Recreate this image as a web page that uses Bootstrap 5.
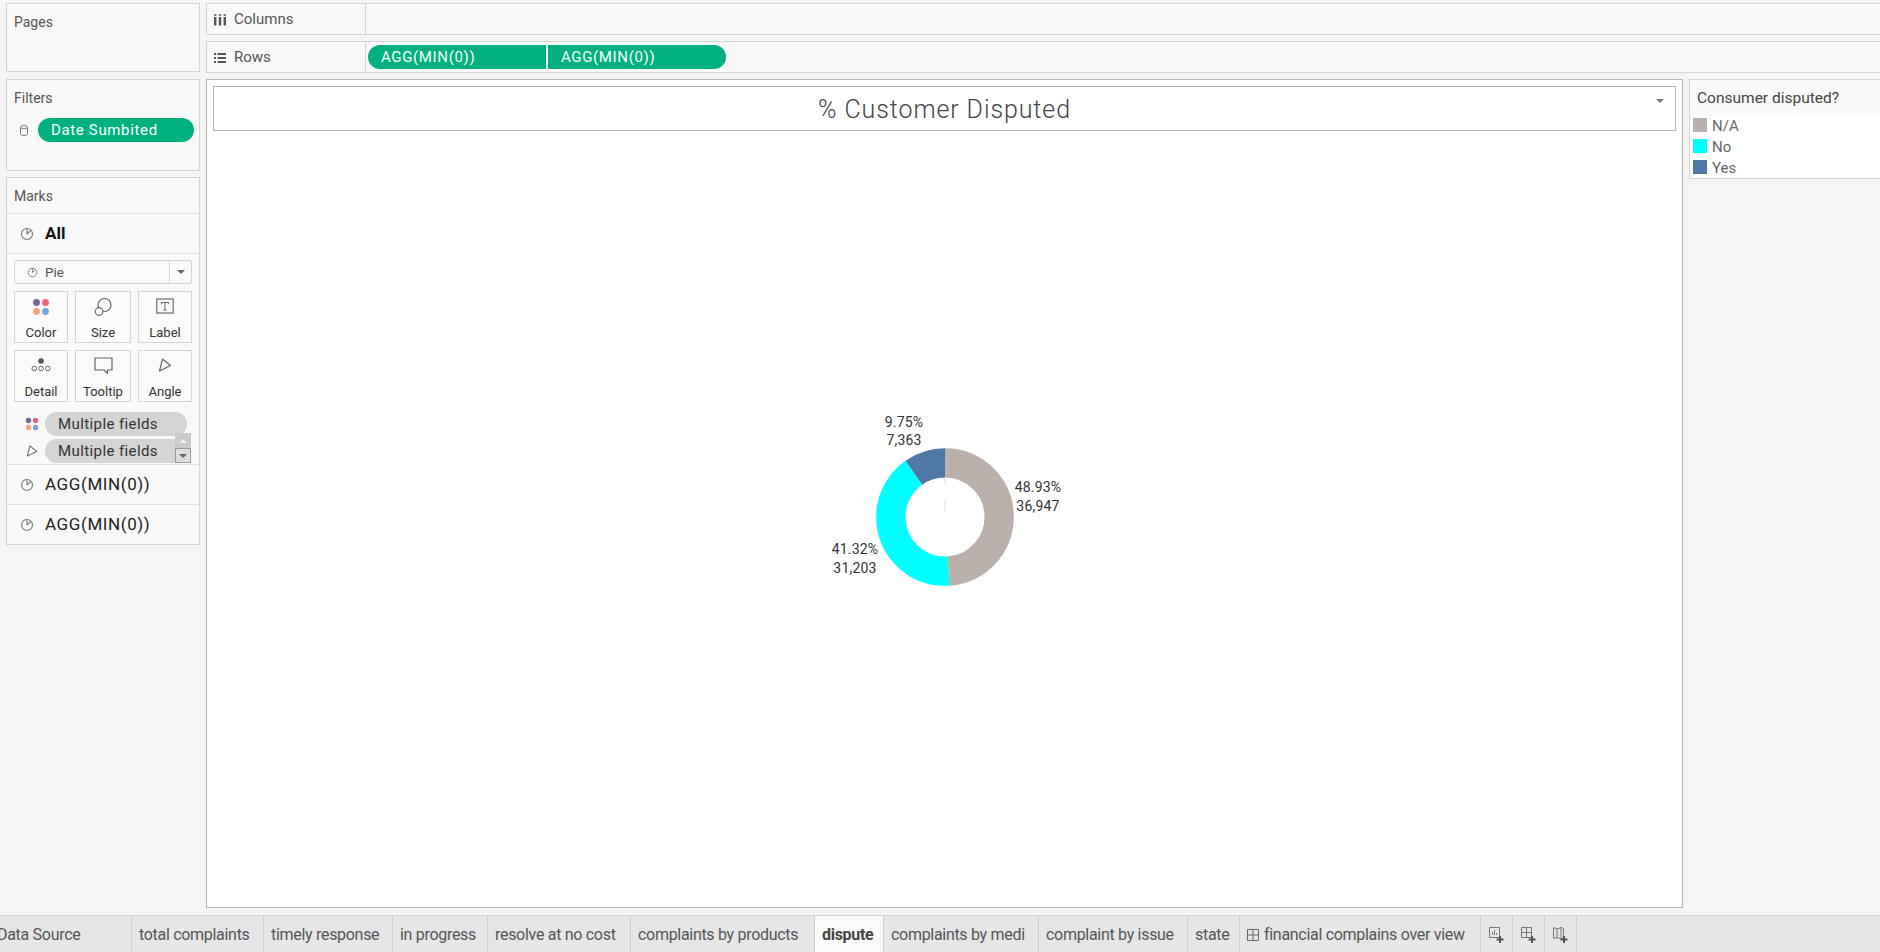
<!DOCTYPE html>
<html lang="en">
<head>
    <meta charset="UTF-8">
    <title>% Customer Disputed</title>
    <link rel="stylesheet" href="https://cdn.jsdelivr.net/npm/bootstrap@5.3.0/dist/css/bootstrap.min.css">
    <style>
        body { background: #f5f5f5; font-family: "Roboto", "Liberation Sans", sans-serif; font-size: 14px; color: #555; overflow: hidden; }
        .work-area { height: 915px; padding: 3px 0 7px 6px; gap: 6px; }
        .side-col { width: 194px; gap: 7px; flex: none; }
        .pane { background: #f9f9f9; border: 1px solid #d4d4d4; }
        .pane-title { padding: 9px 7px 0; line-height: 18px; }
        .pane-pages { height: 69px; }
        .pane-filters { height: 92px; margin-bottom: -1px; }
        .pane-marks { height: 368px; }
        .marks-head { height: 36px; border-bottom: 1px solid #e2e2e2; flex: none; }
        .marks-row { height: 40px; border-bottom: 1px solid #e2e2e2; padding-left: 13px; gap: 11px; color: #222; font-size: 17px; letter-spacing: .6px; flex: none; }
        .marks-row:last-child { border-bottom: 0; height: 39px; }
        .marks-row.all-row { font-weight: 700; color: #111; letter-spacing: 0; }
        .marks-cards { height: 211px; padding: 6px 7px 0; border-bottom: 1px solid #e2e2e2; position: relative; overflow: hidden; flex: none; }
        .mark-select { height: 24px; border: 1px solid #d4d4d4; border-radius: 2px; width: 178px; background: #fafafa; font-size: 13.500px; margin-bottom: 7px; }
        .mark-select-name { padding-left: 12px; gap: 7px; }
        .mark-select-arrow { width: 22px; border-left: 1px solid #d4d4d4; }
        .caret-down { width: 0; height: 0; border-left: 4px solid transparent; border-right: 4px solid transparent; border-top: 4px solid #666; }
        .card-grid { display: grid; grid-template-columns: 54px 56px 54px; column-gap: 7px; row-gap: 7px; width: 178px; margin-bottom: 10px; }
        .mark-card { height: 52px; border: 1px solid #d4d4d4; background: #fafafa; font-size: 13px; color: #333; padding-top: 4px; line-height: 15px; }
        .mark-card svg { height: 24px; margin-bottom: 5px; }
        .field-row { height: 24px; margin-bottom: 3px; padding-left: 11px; gap: 6px; }
        .field-icon { width: 14px; flex: none; }
        .pill { height: 24px; border-radius: 12px; padding-left: 13px; line-height: 25px; font-size: 15px; letter-spacing: .65px; white-space: nowrap; }
        .pill-green { background: #00b180; color: #fff; }
        .pill-gray { background: #d4d4d4; color: #333; width: 142px; letter-spacing: .4px; }
        .filter-row { padding: 11px 5px 0 13px; gap: 10px; }
        .filter-pill { width: 156px; }
        .scroll-stub { position: absolute; left: 168px; top: 179px; width: 16px; }
        .scroll-up { height: 15px; background: #c9c9c9; }
        .scroll-down { height: 15px; background: #dcdcdc; border: 1px solid #999; }
        .caret-up { width: 0; height: 0; border-left: 4px solid transparent; border-right: 4px solid transparent; border-bottom: 4px solid #eee; }
        .main-col { min-width: 0; gap: 6px; }
        .shelf { height: 32px; background: #f9f9f9; border: 1px solid #d4d4d4; border-right: 0; flex: none; }
        .shelf-label { width: 159px; padding: 1px 0 0 7px; gap: 8px; border-right: 1px solid #d4d4d4; font-size: 15px; flex: none; }
        .shelf-pills { padding-left: 2px; gap: 2px; }
        .shelf-pill { width: 178px; }
        .pill-left { border-radius: 12px 0 0 12px; }
        .pill-right { border-radius: 0 12px 12px 0; }
        .view-row { gap: 6px; min-height: 0; }
        .view-box { width: 1477px; background: #fff; border: 1px solid #b3b3b3; padding: 6px 6px 0; flex: none; }
        .title-box { height: 45px; border: 1px solid #b3b3b3; padding-top: 2px; position: relative; font-size: 25px; font-weight: 300; color: #444; letter-spacing: .9px; flex: none; }
        .title-caret { position: absolute; right: 11px; top: 12px; border-top-color: #777; }
        .legend-box { height: 100px; flex-grow: 1; background: #fff; border: 1px solid #d4d4d4; border-right: 0; }
        .legend-head { height: 35px; background: #f9f9f9; padding: 9px 7px 0; line-height: 18px; color: #444; font-size: 15.500px; }
        .legend-items { padding: 3px 3px 0; gap: 7px; color: #666; font-size: 15px; }
        .legend-item { height: 14px; gap: 5px; line-height: 16px; }
        .swatch { width: 14px; height: 14px; }
        .na-swatch { background: #bab0ac; }
        .no-swatch { background: #00ffff; }
        .yes-swatch { background: #4e79a7; }
        .chart-area { flex-grow: 1; }
        .chart-area svg { margin-top: -5px; }
        .chart-label { font-family: "Roboto", "Liberation Sans", sans-serif; font-size: 14px; letter-spacing: .2px; fill: #333; text-anchor: middle; }
        .tab-bar { height: 37px; background: #e6e6e6; border-top: 1px solid #d4d4d4; font-size: 16px; letter-spacing: -.3px; color: #555; overflow: hidden; }
        .sheet-tab { border-right: 1px solid #cfcfcf; padding-left: 7px; padding-top: 1px; white-space: nowrap; flex: none; }
        .sheet-tab.active-tab { background: #fafafa; font-weight: 700; color: #444; }
        .tab-source { width: 132px; padding-left: 0; text-indent: -3px; }
        .tab-total { width: 132px; }
        .tab-timely { width: 129px; }
        .tab-progress { width: 95px; }
        .tab-resolve { width: 143px; }
        .tab-products { width: 184px; }
        .tab-dispute { width: 69px; }
        .tab-medi { width: 155px; }
        .tab-issue { width: 149px; }
        .tab-state { width: 52px; }
        .tab-overview { width: 241px; gap: 5px; }
        .tab-add { width: 32px; padding-left: 0; }
    </style>
</head>
<body>

    <svg width="0" height="0" class="d-block position-absolute">
        <symbol id="pie-icon" viewBox="0 0 14 14">
            <circle cx="7" cy="7" r="5.5" fill="none" stroke="#777" stroke-width="1.1"/>
            <path d="M7 7V1.5M7 7l3.6-3.4" fill="none" stroke="#777" stroke-width="1.1"/>
        </symbol>
        <symbol id="color-icon" viewBox="0 0 18 18">
            <circle cx="4.5" cy="4.5" r="3.4" fill="#7b6593"/>
            <circle cx="13.5" cy="4.5" r="3.4" fill="#f0627c"/>
            <circle cx="4.5" cy="13.5" r="3.4" fill="#f3a579"/>
            <circle cx="13.5" cy="13.5" r="3.4" fill="#78a3d2"/>
        </symbol>
        <symbol id="angle-icon" viewBox="0 0 14 14">
            <path d="M4.500 1 12.500 7.500 1.500 13Z" fill="none" stroke="#666" stroke-width="1.2" stroke-linejoin="round"/>
        </symbol>
    </svg>

    <div class="work-area d-flex">
        <div class="side-col d-flex flex-column">
            <div class="pane pane-pages">
                <div class="pane-title">Pages</div>
            </div>
            <div class="pane pane-filters">
                <div class="pane-title">Filters</div>
                <div class="filter-row d-flex align-items-center">
                    <svg width="8" height="11" viewBox="0 0 8 11"><path d="M.5 2.2C.5 1.2 2 .6 4 .6s3.500.6 3.500 1.600v6.600c0 1-1.500 1.600-3.500 1.600s-3.500-.6-3.500-1.600ZM.5 2.800c.8.800 6.200.8 7 0" fill="none" stroke="#777"/></svg>
                    <div class="pill pill-green filter-pill flex-shrink-0">Date Sumbited</div>
                </div>
            </div>
            <div class="pane pane-marks d-flex flex-column">
                <div class="marks-head pane-title">Marks</div>
                <div class="marks-row all-row d-flex align-items-center">
                    <svg width="14" height="14"><use href="#pie-icon"/></svg>All
                </div>
                <div class="marks-cards">
                    <div class="mark-select d-flex">
                        <div class="mark-select-name flex-grow-1 d-flex align-items-center">
                            <svg width="11" height="11"><use href="#pie-icon"/></svg>Pie
                        </div>
                        <div class="mark-select-arrow d-flex align-items-center justify-content-center"><span class="caret-down"></span></div>
                    </div>
                    <div class="card-grid">
                        <div class="mark-card text-center">
                            <svg width="18" viewBox="0 0 18 24"><use href="#color-icon" y="2" width="18" height="18"/></svg>
                            <div>Color</div>
                        </div>
                        <div class="mark-card text-center">
                            <svg width="20" viewBox="0 0 20 24"><g fill="#fafafa" stroke="#666" stroke-width="1.2"><circle cx="11.500" cy="9" r="6.500"/><circle cx="6" cy="15.500" r="3.800"/></g></svg>
                            <div>Size</div>
                        </div>
                        <div class="mark-card text-center">
                            <svg width="18" viewBox="0 0 18 24"><rect x=".8" y="3" width="16.400" height="14" fill="none" stroke="#777" stroke-width="1.300"/><path d="M5.500 6.500h7v1.800M9 6.500v7.500M7.300 14h3.400M5.500 6.500v1.800" fill="none" stroke="#666"/></svg>
                            <div>Label</div>
                        </div>
                        <div class="mark-card text-center">
                            <svg width="20" viewBox="0 0 20 24"><circle cx="10" cy="6" r="2.800" fill="#555"/><g fill="none" stroke="#666"><circle cx="3.200" cy="13.500" r="2.300"/><circle cx="10" cy="13.500" r="2.300"/><circle cx="16.800" cy="13.500" r="2.300"/></g></svg>
                            <div>Detail</div>
                        </div>
                        <div class="mark-card text-center">
                            <svg width="19" viewBox="0 0 19 24"><path d="M1 3h17v12h-4.500v3.500L10 15H1Z" fill="none" stroke="#666" stroke-width="1.200" stroke-linejoin="round"/></svg>
                            <div>Tooltip</div>
                        </div>
                        <div class="mark-card text-center">
                            <svg width="14" viewBox="0 0 14 24"><use href="#angle-icon" y="3" width="14" height="14"/></svg>
                            <div>Angle</div>
                        </div>
                    </div>
                    <div class="field-row d-flex align-items-center">
                        <svg class="field-icon" height="14"><use href="#color-icon" width="14" height="14"/></svg>
                        <div class="pill pill-gray flex-shrink-0">Multiple fields</div>
                    </div>
                    <div class="field-row d-flex align-items-center">
                        <svg class="field-icon" height="12"><use href="#angle-icon" width="12" height="12" x="1"/></svg>
                        <div class="pill pill-gray flex-shrink-0">Multiple fields</div>
                    </div>
                    <div class="scroll-stub">
                        <div class="scroll-up d-flex align-items-center justify-content-center"><span class="caret-up"></span></div>
                        <div class="scroll-down d-flex align-items-center justify-content-center"><span class="caret-down"></span></div>
                    </div>
                </div>
                <div class="marks-row d-flex align-items-center">
                    <svg width="14" height="14"><use href="#pie-icon"/></svg>AGG(MIN(0))
                </div>
                <div class="marks-row d-flex align-items-center">
                    <svg width="14" height="14"><use href="#pie-icon"/></svg>AGG(MIN(0))
                </div>
            </div>
        </div>

        <div class="main-col flex-grow-1 d-flex flex-column">
            <div class="shelf d-flex">
                <div class="shelf-label d-flex align-items-center">
                    <svg width="12" height="12" viewBox="0 0 12 12"><path d="M0 3h2.400v8.500H0ZM4.800 3h2.400v8.500H4.800ZM9.600 3H12v8.500H9.600ZM0 .3h2.400v1.500H0ZM4.800.3h2.400v1.500H4.800ZM9.600.3H12v1.500H9.600Z" fill="#555"/></svg>
                    Columns
                </div>
            </div>
            <div class="shelf d-flex">
                <div class="shelf-label d-flex align-items-center">
                    <svg width="12" height="12" viewBox="0 0 12 12"><path d="M0 1h2v2H0ZM3.500 1H12v2H3.500ZM0 5h2v2H0ZM3.500 5H12v2H3.500ZM0 9h2v2H0ZM3.500 9H12v2H3.500Z" fill="#555"/></svg>
                    Rows
                </div>
                <div class="shelf-pills d-flex align-items-center">
                    <div class="pill pill-green pill-left shelf-pill">AGG(MIN(0))</div>
                    <div class="pill pill-green pill-right shelf-pill">AGG(MIN(0))</div>
                </div>
            </div>
            <div class="view-row flex-grow-1 d-flex">
                <div class="view-box d-flex flex-column">
                    <div class="title-box d-flex align-items-center justify-content-center">
                        % Customer Disputed
                        <span class="caret-down title-caret"></span>
                    </div>
                    <div class="chart-area d-flex align-items-center justify-content-center">
                        <svg width="360" height="260" viewBox="-180 -130 360 260">
                            <g transform="rotate(-90)" fill="none" stroke-width="29.300">
                                <circle r="54.150" pathLength="100" stroke="#bab0ac" stroke-dasharray="48.93 100"/>
                                <circle r="54.150" pathLength="100" stroke="#00ffff" stroke-dasharray="41.32 100" stroke-dashoffset="-48.93"/>
                                <circle r="54.150" pathLength="100" stroke="#4e79a7" stroke-dasharray="9.75 100" stroke-dashoffset="-90.25"/>
                            </g>
                            <path d="M0-38v5M0-17V-5" stroke="#d3dfeb"/>
                            <text class="chart-label" x="-41" y="-90">9.75%</text>
                            <text class="chart-label" x="-41" y="-72.500">7,363</text>
                            <text class="chart-label" x="93" y="-25">48.93%</text>
                            <text class="chart-label" x="93" y="-6.500">36,947</text>
                            <text class="chart-label" x="-90" y="37">41.32%</text>
                            <text class="chart-label" x="-90" y="55.500">31,203</text>
                        </svg>
                    </div>
                </div>
                <div class="legend-box">
                    <div class="legend-head">Consumer disputed?</div>
                    <div class="legend-items d-flex flex-column">
                        <div class="legend-item d-flex"><span class="swatch na-swatch"></span>N/A</div>
                        <div class="legend-item d-flex"><span class="swatch no-swatch"></span>No</div>
                        <div class="legend-item d-flex"><span class="swatch yes-swatch"></span>Yes</div>
                    </div>
                </div>
            </div>
        </div>
    </div>

    <div class="tab-bar d-flex">
        <div class="sheet-tab tab-source d-flex align-items-center">Data Source</div>
        <div class="sheet-tab tab-total d-flex align-items-center">total complaints</div>
        <div class="sheet-tab tab-timely d-flex align-items-center">timely response</div>
        <div class="sheet-tab tab-progress d-flex align-items-center">in progress</div>
        <div class="sheet-tab tab-resolve d-flex align-items-center">resolve at no cost</div>
        <div class="sheet-tab tab-products d-flex align-items-center">complaints by products</div>
        <div class="sheet-tab tab-dispute active-tab d-flex align-items-center">dispute</div>
        <div class="sheet-tab tab-medi d-flex align-items-center">complaints by medi</div>
        <div class="sheet-tab tab-issue d-flex align-items-center">complaint by issue</div>
        <div class="sheet-tab tab-state d-flex align-items-center">state</div>
        <div class="sheet-tab tab-overview d-flex align-items-center">
            <svg width="12" height="12" viewBox="0 0 12 12"><path d="M.5.500h11v11H.5ZM6 .5v11M.5 6h11" fill="none" stroke="#666"/></svg>
            financial complains over view
        </div>
        <div class="sheet-tab tab-add d-flex align-items-center justify-content-center">
            <svg width="16" height="18" viewBox="0 0 16 18"><path d="M.5 1.500h10v10H.5Z" fill="none" stroke="#777"/><path d="M3.500 9V6M5.500 9V4M7.500 9V7" stroke="#777"/><path d="M11 10v7M7.500 13.500h7" stroke="#555" stroke-width="2"/></svg>
        </div>
        <div class="sheet-tab tab-add d-flex align-items-center justify-content-center">
            <svg width="16" height="18" viewBox="0 0 16 18"><path d="M.5 1.500h10v10H.5ZM5.500 1.500v10M.5 6.500h10" fill="none" stroke="#777"/><path d="M11 10v7M7.500 13.500h7" stroke="#555" stroke-width="2"/></svg>
        </div>
        <div class="sheet-tab tab-add d-flex align-items-center justify-content-center">
            <svg width="16" height="18" viewBox="0 0 16 18"><path d="M.5 1.500 4 3l4-1.500 2.500 1V12L8 13l-4-1.500-3.500 1ZM4 3v8.500M8 1.500V13" fill="none" stroke="#777"/><path d="M11 10v7M7.500 13.500h7" stroke="#555" stroke-width="2"/></svg>
        </div>
    </div>

</body>
</html>
